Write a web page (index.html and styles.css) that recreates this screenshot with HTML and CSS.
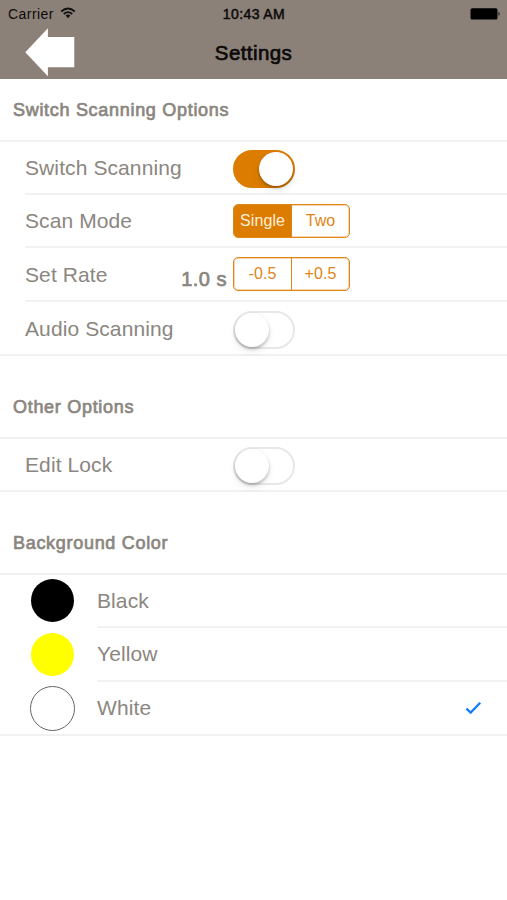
FILE: index.html
```html
<!DOCTYPE html>
<html lang="en">
<head>
<meta charset="utf-8">
<title>Settings</title>
<link rel="stylesheet" href="styles.css">
</head>
<body>
<header class="top">
  <div class="status">
    <div class="carrier"><span>Carrier</span>
      <svg class="wifi" width="16" height="12" viewBox="0 0 16 12"><g fill="none" stroke="#111" stroke-width="1.8"><path d="M1.2 4.5Q8 -1.6 14.8 4.5"/><path d="M3.8 7Q8 3.2 12.2 7"/></g><path d="M5.6 8.6Q8 6.6 10.4 8.6L8 11.3Z" fill="#111"/></svg>
    </div>
    <time class="clock">10:43 AM</time>
    <svg class="battery" width="31" height="12" viewBox="0 0 31 12"><rect x="0.5" y="0.3" width="27" height="11.2" rx="1.6"/><path d="M28.6 3.8Q30.6 5.9 28.6 8Z"/></svg>
  </div>
  <nav class="nav">
    <svg class="back" width="50" height="50" viewBox="0 0 50 50"><path d="M.3 25.2L22.9 1.3V10H49.3V40.3H22.9V49.3Z" fill="#fff"/></svg>
    <h1>Settings</h1>
  </nav>
</header>
<main>
  <h2>Switch Scanning Options</h2>
  <section class="group scanning">
    <div class="row"><span class="label">Switch Scanning</span><span class="switch on"><i></i></span></div>
    <div class="row"><span class="label">Scan Mode</span><div class="segment"><b class="active">Single</b><b>Two</b></div></div>
    <div class="row"><span class="label">Set Rate</span><span class="value">1.0 s</span><div class="segment"><b>-0.5</b><b>+0.5</b></div></div>
    <div class="row"><span class="label">Audio Scanning</span><span class="switch"><i></i></span></div>
  </section>
  <h2>Other Options</h2>
  <section class="group">
    <div class="row"><span class="label">Edit Lock</span><span class="switch"><i></i></span></div>
  </section>
  <h2>Background Color</h2>
  <section class="group colors">
    <div class="row"><span class="dot black"></span><span class="label">Black</span></div>
    <div class="row"><span class="dot yellow"></span><span class="label">Yellow</span></div>
    <div class="row"><span class="dot white"></span><span class="label">White</span>
      <svg class="check" width="17" height="14" viewBox="0 0 17 14"><path d="M1.4 7.6L5.7 11.6L15.2 1.8" fill="none" stroke="#147efb" stroke-width="2.3"/></svg></div>
  </section>
</main>
</body>
</html>
```
FILE: styles.css
```css
* { box-sizing: border-box; }
body {
  margin: 0;
  background: #fff;
  color: #8b8680;
  font-family: "Liberation Sans", Arial, sans-serif;
}
svg { display: block; }
.top {
  height: 79px;
  background: #8c8179;
  color: #0c0b0a;
}
.status {
  display: grid;
  grid-template-columns: 1fr auto 1fr;
  align-items: center;
  height: 27px;
  padding: 0 6px 0 8px;
  font-size: 14px;
}
.carrier { display: flex; align-items: center; gap: 6px; letter-spacing: .45px; }
.wifi { margin-top: -2px; }
.clock { -webkit-text-stroke: .5px; letter-spacing: .4px; margin-right: 1px; }
.battery { justify-self: end; }
.nav {
  display: grid;
  grid-template-columns: 1fr auto 1fr;
  height: 52px;
}
.back { margin-left: 25px; }
h1 {
  margin: 0;
  font-size: 20.5px;
  font-weight: 400;
  line-height: 51px;
  letter-spacing: .4px;
  -webkit-text-stroke: .7px;
}
h2 {
  height: 81px;
  margin: 0;
  padding: 20px 0 0 13px;
  font-size: 18px;
  font-weight: 400;
  line-height: 62px;
  letter-spacing: .7px;
  -webkit-text-stroke: .7px;
}
h2:first-child { height: 61px; padding-top: 0; }
.group { border-top: 2px solid #f1f1f1; border-bottom: 2px solid #f1f1f1; }
.row {
  display: flex;
  align-items: center;
  height: 54px;
  margin-left: 25px;
  border-bottom: 2px solid #f1f1f1;
}
.row:first-child { height: 53px; }
.scanning .row:nth-child(2) { height: 53px; }
.scanning .row:nth-child(n+3) .label { margin-top: 2px; }
.row:last-child { height: 52px; border: 0; }
.row:only-child { height: 51px; }
.label {
  width: 208px;
  font-size: 21px;
  line-height: 30px;
  letter-spacing: .1px;
}
.value {
  width: 60px;
  margin: 10px 0 0 -60px;
  padding-right: 6px;
  text-align: right;
  font-size: 20px;
  letter-spacing: .5px;
  white-space: nowrap;
  -webkit-text-stroke: .7px;
}
.switch {
  width: 62px;
  height: 38px;
  margin-top: 3px;
  border: 2px solid #e8e8e8;
  border-radius: 19px;
}
.switch i {
  display: block;
  width: 34px;
  height: 34px;
  border-radius: 50%;
  background: #fff;
  box-shadow: 0 2px 3px rgba(0,0,0,.24), 0 4px 8px rgba(0,0,0,.08);
}
.switch.on { background: #dc7c00; border-color: #dc7c00; }
.switch.on i { margin-left: 24px; }
.segment {
  display: flex;
  width: 117px;
  height: 34px;
  border: 1px solid #df8618;
  border-radius: 5px;
  box-shadow: inset 0 0 0 1px rgba(220,124,0,.3);
  overflow: hidden;
  color: #df8416;
}
.segment b {
  flex: 1;
  font-size: 16px;
  font-weight: 400;
  line-height: 32px;
  letter-spacing: .1px;
  text-align: center;
}
.segment b + b { border-left: 1.5px solid #df8618; }
.segment .active { background: #dc7c00; color: #fff0dc; }
.colors .row { margin-left: 97px; }
.colors .label { width: auto; }
.dot {
  flex: none;
  width: 43px;
  height: 43px;
  margin: 0 23px 0 -66px;
  border-radius: 50%;
}
.black { background: #000; }
.yellow { background: #ff0; }
.white {
  width: 45px;
  height: 45px;
  margin: 0 22px 0 -67px;
  border: 1.5px solid #666;
}
.check { margin: 0 25px 0 auto; }
```
